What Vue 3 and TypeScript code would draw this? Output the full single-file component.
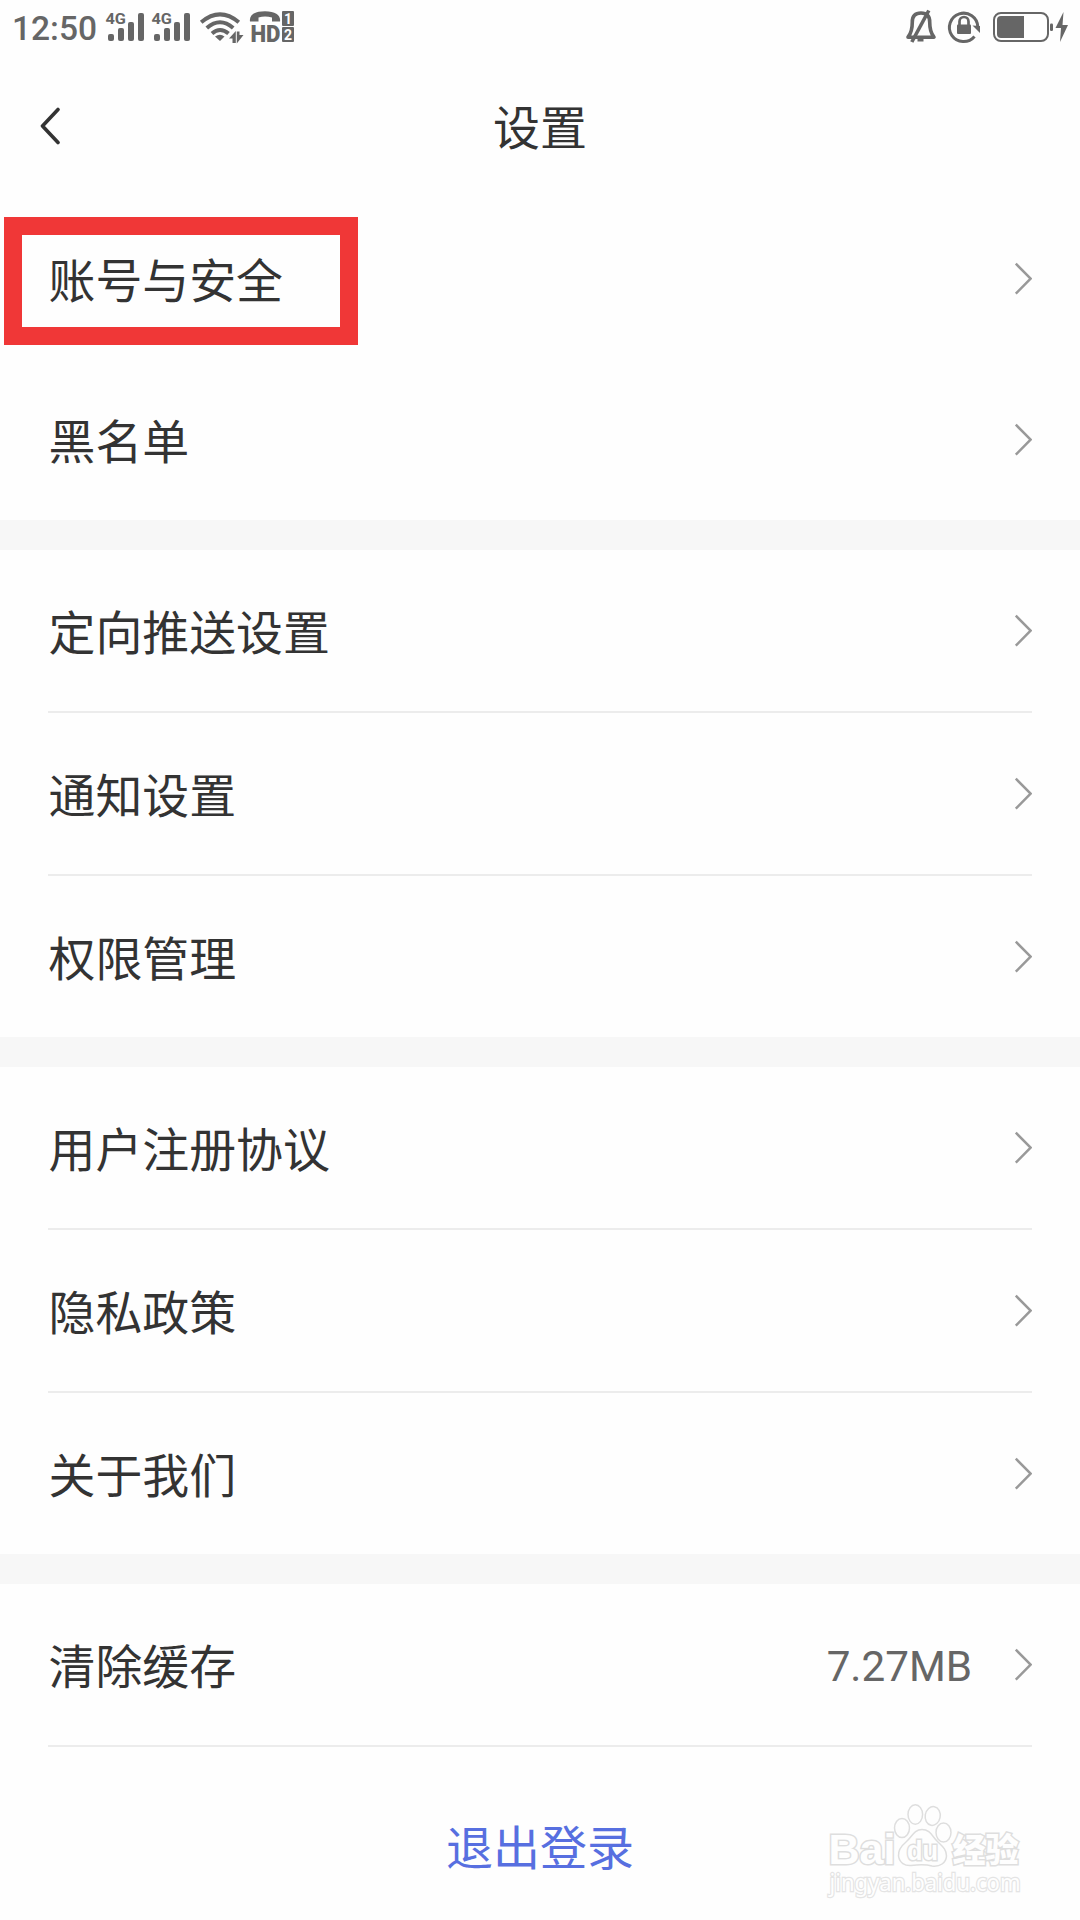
<script setup lang="ts">
interface Row {
  label: string
  value?: string
  marked?: boolean
}
interface Group {
  rows: Row[]
  divided: boolean
}

const groups: Group[] = [
  { divided: false, rows: [{ label: '账号与安全', marked: true }, { label: '黑名单' }] },
  { divided: true, rows: [{ label: '定向推送设置' }, { label: '通知设置' }, { label: '权限管理' }] },
  { divided: true, rows: [{ label: '用户注册协议' }, { label: '隐私政策' }, { label: '关于我们' }] },
]
const cache: Row = { label: '清除缓存', value: '7.27MB' }
const allGroups: Group[] = [...groups, { divided: true, rows: [cache] }]
</script>

<template>
  <div class="screen">
    <div class="status">
      <span class="time">12:50</span>
      <svg class="status-left" width="196" height="56" viewBox="104 0 196 56">
        <g v-for="x in [0, 46]" :key="x" :transform="`translate(${x} 0)`">
          <text x="105.5" y="24.200" class="net" textLength="20.500" lengthAdjust="spacingAndGlyphs">4G</text>
          <rect x="108" y="34" width="6" height="7" rx="2" />
          <rect x="118" y="28" width="6" height="13" rx="2" />
          <rect x="128" y="22" width="6" height="19" rx="2" />
          <rect x="138" y="13" width="6" height="28" rx="2" />
        </g>
        <g fill="none" stroke="#666" stroke-width="4">
          <path d="M201.2 22.3Q220 6.5 238.800 22.300" />
          <path d="M206.800 28Q220 16.500 233.200 28" />
          <path d="M212 33.500Q220 26.500 228.500 33.500" />
        </g>
        <path d="M215 36.500Q220 33 224.500 36.500L220 41Z" />
        <path d="M229 38.500L235.800 31V43H232.500V38.500Z" />
        <path d="M236.800 31.500H239.500V35H243.500L236.800 43.500Z" />
        <path d="M250 21.500C249 15.500 254 11.200 265 11.200S281 15.500 280 21.500H272V17.500Q265 15.500 258.500 17.500V21.500Z" />
        <text x="250.500" y="41.700" class="hd" textLength="30" lengthAdjust="spacingAndGlyphs">HD</text>
        <rect x="282" y="11" width="12" height="15" rx="1" />
        <rect x="282" y="27" width="12" height="15" rx="1" />
        <text x="288" y="23.500" class="sim">1</text>
        <text x="288" y="39.500" class="sim">2</text>
      </svg>
      <svg class="status-right" width="180" height="56" viewBox="900 0 180 56">
        <g fill="none" stroke="#666" stroke-width="3.600" stroke-linejoin="round">
          <path d="M908 37.200Q912.300 32 912.300 22Q912.300 13 921 13Q929.700 13 929.700 22Q929.700 32 934 37.200Z" />
          <path d="M928.800 10.500L911.800 42" />
        </g>
        <path d="M917.500 38h6v3.500h-6z" />
        <path d="M977.800 27A14.200 14.200 0 1 0 974.500 36.500" fill="none" stroke="#666" stroke-width="3" />
        <path d="M972.500 25.500L980 26V33Z" />
        <rect x="957" y="24.500" width="14" height="9.500" rx="1" />
        <path d="M959.500 25V21.500a4.500 4.500 0 0 1 9 0V25" fill="none" stroke="#666" stroke-width="2.700" />
        <rect x="994" y="13" width="54" height="28" rx="7" fill="none" stroke="#666" stroke-width="2" />
        <path d="M1001 16H1024V38H1001Q997 38 997 34V20Q997 16 1001 16Z" />
        <rect x="1050" y="23.500" width="3" height="7.500" rx="1.200" />
        <path d="M1063.500 12L1055.500 28H1061L1060 42L1068 25H1062.500Z" />
      </svg>
    </div>

    <header class="header">
      <svg class="back" width="24" height="40" viewBox="0 0 24 40">
        <path d="M20 2.500L4.500 19L20 35.500" fill="none" stroke="#333" stroke-width="3.600" stroke-linecap="round" stroke-linejoin="round" />
      </svg>
      <h1 class="title">设置</h1>
      <span class="side"></span>
    </header>

    <main>
      <section v-for="(group, i) in allGroups" :key="i" class="group" :class="{ divided: group.divided, last: i === 3 }">
        <div v-for="row in group.rows" :key="row.label" class="row">
          <span class="label">{{ row.label }}<i v-if="row.marked" class="mark"></i></span>
          <span v-if="row.value" class="value">{{ row.value }}</span>
          <svg class="arrow" width="18" height="34" viewBox="0 0 18 34">
            <path d="M1.800 1.700L16.600 16.700L1.800 31.700" fill="none" stroke="#999" stroke-width="2.500" />
          </svg>
        </div>
      </section>
    </main>

    <button class="logout">退出登录</button>

    <svg class="watermark" width="220" height="110" viewBox="815 1795 220 110">
      <g class="wm">
        <text x="828.500" y="1863.500" class="bai" textLength="67" lengthAdjust="spacingAndGlyphs">Bai</text>
        <ellipse cx="902" cy="1828" rx="7.500" ry="9.500" />
        <ellipse cx="915.300" cy="1814.500" rx="7.300" ry="9.700" />
        <ellipse cx="932.700" cy="1816" rx="7.500" ry="9.500" transform="rotate(10 932.700 1816)" />
        <ellipse cx="943.500" cy="1832.500" rx="7.500" ry="9.500" />
        <path d="M922 1829.500C914 1829.500 912 1837 906 1842C900 1847 898 1851 898.500 1856C899.500 1863 905 1866 911 1865.500C918 1864.500 927 1864.500 932 1866C940 1867 946 1863 946.500 1856C946.500 1849 942 1846 937 1841C932 1836 930 1829.500 922 1829.500Z" />
        <text x="907" y="1860" class="du" textLength="31" lengthAdjust="spacingAndGlyphs">du</text>
        <text x="952.500" y="1862" class="jy" textLength="66" lengthAdjust="spacingAndGlyphs">经验</text>
        <text x="829.500" y="1890.500" class="url" textLength="191" lengthAdjust="spacingAndGlyphs">jingyan.baidu.com</text>
      </g>
    </svg>
  </div>
</template>

<style>
body {
  margin: 0;
  background: #fefefe;
}
</style>

<style scoped>
.screen {
  position: relative;
  width: 1080px;
  height: 1920px;
  overflow: hidden;
  display: flex;
  flex-direction: column;
  background: #fefefe;
  color: #333;
  font-family: Roboto, "Noto Sans CJK SC", sans-serif;
}
.status {
  height: 56px;
  display: flex;
  align-items: center;
  flex: none;
  padding-left: 12px;
  box-sizing: border-box;
}
.status svg {
  fill: #666;
  display: block;
  flex: none;
}
.time {
  width: 92px;
  padding-top: 2px;
  font-size: 33.5px;
  font-weight: 500;
  line-height: 54px;
  color: #666;
  white-space: nowrap;
}
.status-right {
  margin-left: auto;
}
.net {
  font: 700 15.5px Roboto, sans-serif;
}
.hd {
  font: 900 23.5px Roboto, sans-serif;
}
.sim {
  font: 700 14px Roboto, sans-serif;
  fill: #fefefe;
  text-anchor: middle;
}
.header {
  height: 142px;
  flex: none;
  box-sizing: border-box;
  padding: 0 38px 0;
  display: flex;
  align-items: center;
  justify-content: space-between;
}
.back,
.side {
  width: 24px;
  flex: none;
}
.title {
  margin: 0;
  padding-top: 4px;
  font-size: 47px;
  font-weight: 400;
  line-height: 138px;
}
.group {
  padding: 0 48px;
  border-bottom: 30px solid #f7f7f7;
}
.group.last {
  border-bottom: 0;
}
.row {
  height: 161px;
  display: flex;
  align-items: center;
}
.divided .row:not(:last-child),
.last .row {
  border-bottom: 2px solid #ececec;
}
.label {
  position: relative;
  flex: 1;
  padding: 7px 0 0 0.5px;
  font-size: 46.9px;
  line-height: 70px;
}
.mark {
  position: absolute;
  left: -44px;
  top: -23px;
  width: 354px;
  height: 128px;
  box-sizing: border-box;
  border: 18px solid #f03737;
}
.value {
  font-size: 42.2px;
  line-height: 60px;
  padding-top: 4px;
  color: #666;
  margin-right: 42px;
}
.arrow {
  display: block;
  flex: none;
}
.logout {
  border: 0;
  padding: 0;
  background: none;
  height: 195px;
  margin-bottom: -30px;
  flex: none;
  font: inherit;
  font-size: 47px;
  color: #576fe0;
}
.watermark {
  position: absolute;
  left: 815px;
  top: 1795px;
}
.wm {
  fill: #fefefe;
  stroke: #dedede;
  stroke-width: 1.5px;
}
.wm text {
  paint-order: stroke;
  stroke-width: 3px;
}
.bai {
  font: 700 42px "Liberation Sans", sans-serif;
}
.du {
  font: 700 27px "Liberation Sans", sans-serif;
}
.jy {
  font: 900 33px "Noto Sans CJK SC", sans-serif;
}
.wm .url {
  font: 400 23px "Noto Sans", sans-serif;
  stroke: #e4e4e4;
  stroke-width: 2.4px;
}
</style>
